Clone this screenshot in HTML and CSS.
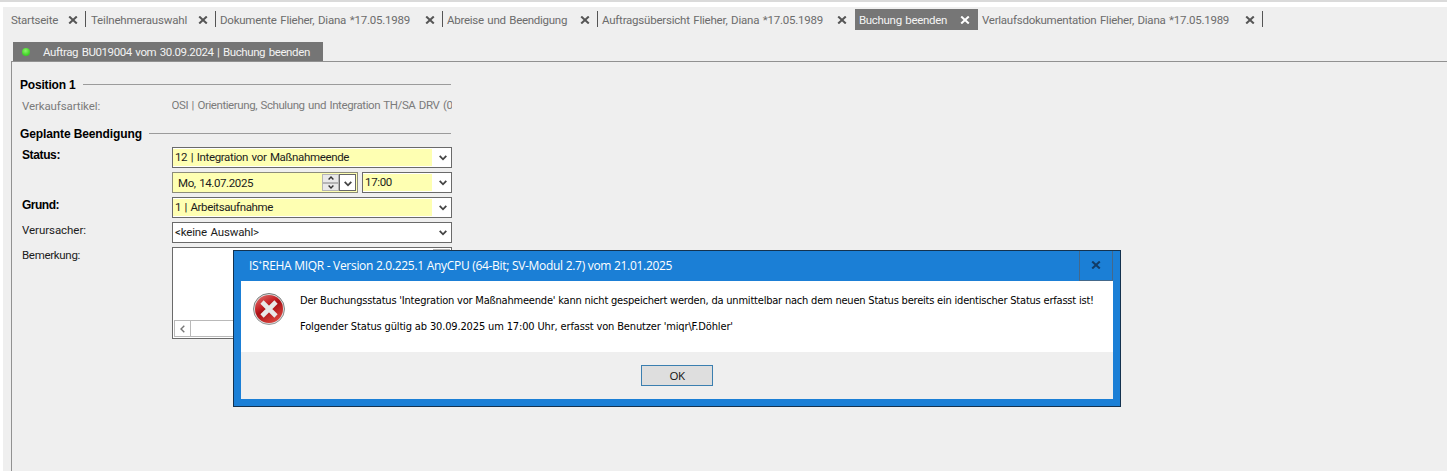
FILE: index.html
```
<!DOCTYPE html>
<html lang="de">
<head>
<meta charset="utf-8">
<title>Buchung beenden</title>
<link rel="stylesheet" href="styles.css">
</head>
<body>
<svg width="0" height="0" class="defs">
  <symbol id="x" viewBox="0 0 10 8"><path d="M1.2 .5 8.8 7.5M8.8 .5 1.2 7.5" fill="none" stroke="currentColor" stroke-width="2"/></symbol>
  <symbol id="chev" viewBox="0 0 8 6"><path d="M.7 .8 4 4.3 7.3 .8" fill="none" stroke="currentColor" stroke-width="1.8"/></symbol>
</svg>
<div class="app">
  <nav class="tabs">
    <div class="tab t1"><span>Startseite</span><svg class="x"><use href="#x"/></svg></div>
    <div class="tab t2"><span>Teilnehmerauswahl</span><svg class="x"><use href="#x"/></svg></div>
    <div class="tab t3"><span>Dokumente Flieher, Diana *17.05.1989</span><svg class="x"><use href="#x"/></svg></div>
    <div class="tab t4"><span>Abreise und Beendigung</span><svg class="x"><use href="#x"/></svg></div>
    <div class="tab t5"><span>Auftragsübersicht Flieher, Diana *17.05.1989</span><svg class="x"><use href="#x"/></svg></div>
    <div class="tab t6 active"><span>Buchung beenden</span><svg class="x"><use href="#x"/></svg></div>
    <div class="tab t7"><span>Verlaufsdokumentation Flieher, Diana *17.05.1989</span><svg class="x"><use href="#x"/></svg></div>
  </nav>
  <div class="subtab"><i class="led"></i><span>Auftrag BU019004 vom 30.09.2024 | Buchung beenden</span></div>
  <main class="panel">
    <h2 class="group g1"><span>Position 1</span></h2>
    <div class="row info"><label class="l-art">Verkaufsartikel:</label><span class="article">OSI | Orientierung, Schulung und Integration TH/SA DRV (0</span></div>
    <h2 class="group g2"><span>Geplante Beendigung</span></h2>
    <div class="row"><label class="req">Status:</label><div class="combo need c-status"><span>12 | Integration vor Maßnahmeende</span><b><svg class="chev"><use href="#chev"/></svg></b></div></div>
    <div class="row"><label></label>
      <div class="date"><span>Mo, 14.07.2025</span>
        <div class="spin"><i><svg viewBox="0 0 6 4"><path d="M.6 3.5 3 1 5.4 3.5"/></svg></i><i><svg viewBox="0 0 6 4"><path d="M.6 .5 3 3 5.4 .5"/></svg></i></div>
        <div class="drop"><svg class="chev"><use href="#chev"/></svg></div>
      </div>
      <div class="combo need time"><span>17:00</span><b><svg class="chev"><use href="#chev"/></svg></b></div>
    </div>
    <div class="row"><label class="req grund">Grund:</label><div class="combo need c-grund"><span>1 | Arbeitsaufnahme</span><b><svg class="chev"><use href="#chev"/></svg></b></div></div>
    <div class="row"><label class="l-ver">Verursacher:</label><div class="combo c-ver"><span>&lt;keine Auswahl&gt;</span><b><svg class="chev"><use href="#chev"/></svg></b></div></div>
    <div class="row"><label class="l-bem">Bemerkung:</label>
      <div class="memo"><div class="vbar"></div><div class="hbar"><i><svg viewBox="0 0 5 8"><path d="M4.3 .7 1 4 4.3 7.3"/></svg></i></div></div>
    </div>
  </main>
</div>
<div class="dialog" role="dialog">
  <header><span>IS<i class="plus">⁺</i>REHA MIQR - Version 2.0.225.1 AnyCPU (64-Bit; SV-Modul 2.7) vom 21.01.2025</span><button class="close"><svg class="x"><use href="#x"/></svg></button></header>
  <div class="message">
    <svg class="error" viewBox="0 0 34 34">
      <defs>
        <linearGradient id="red" x1="0" y1="0" x2=".6" y2="1"><stop offset="0" stop-color="#e07a76"/><stop offset=".4" stop-color="#c8262a"/><stop offset=".55" stop-color="#a90f14"/><stop offset="1" stop-color="#d8403a"/></linearGradient>
        <linearGradient id="ring" x1="0" y1="0" x2="0" y2="1"><stop offset="0" stop-color="#777"/><stop offset="1" stop-color="#999"/></linearGradient>
      </defs>
      <circle cx="17" cy="17" r="15.5" fill="#ddd" stroke="url(#ring)"/>
      <circle cx="17" cy="17" r="14" fill="url(#red)"/>
      <path d="M10 10 24 24M24 10 10 24" stroke="#e8e8e8" stroke-width="4.6"/>
    </svg>
    <div class="lines"><p class="m1">Der Buchungsstatus 'Integration vor Maßnahmeende' kann nicht gespeichert werden, da unmittelbar nach dem neuen Status bereits ein identischer Status erfasst ist!</p><p class="m2">Folgender Status gültig ab 30.09.2025 um 17:00 Uhr, erfasst von Benutzer 'miqr\F.Döhler'</p></div>
  </div>
  <footer><button class="ok">OK</button></footer>
</div>
</body>
</html>
```
FILE: styles.css
```
* { box-sizing: border-box; }
body { margin: 0; background: #fff; font: 11.5px/20px Roboto, "Liberation Sans", sans-serif; word-spacing: 1px; color: #1c1c1c; overflow: hidden; }
svg { display: block; flex: none; }
.defs { position: absolute; }
.app { height: 471px; border-top: 2px solid #dadada; padding: 5px 0 0 3px; display: flex; flex-direction: column; background: #efefef content-box; white-space: nowrap; }

.tabs { display: flex; padding: 2px 0 0 4px; height: 35px; flex: none; color: #6c6c6c; }
.tab { display: flex; align-items: center; justify-content: space-between; height: 21px; padding: 0 8px 0 4px; position: relative; }
.tab::after { content: ""; position: absolute; right: 0; top: 2px; height: 16px; border-right: 1px solid #555; }
.tab .x { color: #555; }
.x { width: 10px; height: 8px; }
.t1 { width: 79px; letter-spacing: -.245px; }
.t2 { width: 130px; padding-left: 5px; letter-spacing: -.185px; }
.t3 { width: 227px; letter-spacing: -.227px; }
.t4 { width: 155px; letter-spacing: -.275px; }
.t5 { width: 257px; letter-spacing: -.225px; }
.t6 { width: 123px; letter-spacing: -.32px; }
.t7 { width: 285px; letter-spacing: -.25px; }
.t5::after, .t6::after { display: none; }
.active { background: #767676; color: #f4f4f4; }
.active .x { color: #fff; }

.subtab { display: flex; align-items: center; flex: none; width: 310px; height: 19px; margin-left: 10px; padding-left: 9px; gap: 13px; background: #757575; color: #f2f2f2; letter-spacing: -.393px; }
.led { width: 8px; height: 8px; border-radius: 50%; background: radial-gradient(circle at 45% 35%, #8cf568, #45d42c 60%, #2fb820); }

.panel { flex: 1; margin-left: 8px; border: solid #919191; border-width: 1px 0 0 1px; padding: 13px 0 0 8px; }
.group { display: flex; align-items: center; gap: 7px; width: 431px; height: 20px; margin: 0; font: bold 12px/20px "Liberation Sans", sans-serif; word-spacing: 0; color: #000; }
.group::after { content: ""; flex: 1; height: 1px; background: #9b9b9b; margin-top: -1px; }
.g1 { letter-spacing: -.18px; }
.g2 { margin: 9px 0 3px; letter-spacing: -.11px; }
.row { display: flex; margin: 0 0 4px 2px; }
.row label { width: 150px; flex: none; height: 21px; line-height: 17px; }
.row .req { font: bold 12px/17px "Liberation Sans", sans-serif; letter-spacing: -.38px; color: #000; }
.row .grund { letter-spacing: -.5px; }
.row.info { margin-bottom: 0; color: #7b7b7b; height: 20px; }
.row .l-art { letter-spacing: -.11px; line-height: 22px; }
.l-ver { letter-spacing: -.055px; }
.l-bem { letter-spacing: -.31px; }
.article { width: 280px; overflow: hidden; letter-spacing: -.413px; text-indent: -.5px; }

.combo { display: flex; width: 280px; height: 21px; border: 1px solid #6a6a6a; background: #fff; padding: 1px 0; }
.combo span { flex: 1; padding-left: 2px; line-height: 17px; }
.combo b { width: 19px; display: flex; align-items: center; justify-content: center; padding-left: 3px; }
.need span { background: #feffb2; }
.chev { width: 8px; height: 6px; color: #444; }
.c-status { letter-spacing: -.35px; }
.c-grund { letter-spacing: -.38px; }
.c-ver { letter-spacing: -.17px; }
.time { width: 90px; letter-spacing: -.33px; }
.date { display: flex; width: 186px; height: 21px; margin-right: 4px; border: 1px solid #8c8c7a; background: #feffb2; padding: 1px 1px 1px 5px; letter-spacing: -.39px; line-height: 19px; }
.date span { flex: 1; }
.spin { width: 17px; display: flex; flex-direction: column; }
.spin i { flex: 1; display: flex; align-items: center; justify-content: center; background: #e9e9e9; border: 1px solid #b4b4b4; }
.spin svg { width: 6px; height: 4px; overflow: visible; }
.spin path { fill: none; stroke: #333; stroke-width: 1.4; }
.drop { width: 17px; border: 1px solid #666; background: #fff; display: flex; align-items: center; justify-content: center; padding-top: 2px; }
.memo { width: 280px; height: 92px; border: 1px solid #6a6a6a; background: #fff; padding: 1px; display: flex; flex-direction: column; justify-content: space-between; }
.vbar { align-self: flex-end; width: 17px; height: 16px; border: 1px solid #b5b5b5; }
.hbar { height: 17px; border: 1px solid #b9b9b9; }
.hbar i { display: flex; align-items: center; justify-content: center; width: 16px; height: 15px; border-right: 1px solid #b9b9b9; }
.hbar svg { width: 5px; height: 8px; }
.hbar path { fill: none; stroke: #777; stroke-width: 1.4; }

.dialog { position: absolute; left: 233px; top: 250px; width: 888px; height: 157px; background: #1b7fd6; border: 1px solid #14324f; padding: 0 7px 7px; display: flex; flex-direction: column; white-space: nowrap; word-spacing: 0; }
.dialog header { display: flex; justify-content: space-between; height: 30px; padding-left: 8px; color: #fff; font: 12px/29px "Open Sans", "Noto Sans", sans-serif; letter-spacing: -.3px; }
.plus { position: relative; top: -2px; font-style: normal; }
.close { width: 34px; height: 30px; padding: 0 0 1px; display: flex; align-items: center; justify-content: center; background: none; border: 1px solid #44688a; border-top: 0; color: #123c66; }
.close .x { width: 10px; }
.message { display: flex; height: 71px; flex: none; background: #fff; padding: 11px 0 0 11px; }
.error { width: 34px; height: 34px; }
.lines { padding: 1px 0 0 14px; color: #000; font: 11px/16px "DejaVu Sans Condensed", "DejaVu Sans", sans-serif; font-stretch: condensed; }
.lines p { margin: 0 0 10px; }
.m1 { letter-spacing: -.206px; }
.m2 { letter-spacing: -.147px; }
.dialog footer { flex: 1; background: #efefef; display: flex; justify-content: center; padding-top: 13px; }
.ok { width: 72px; height: 21px; padding: 0; border: 1px solid #3b7fb0; background: #dedede; color: #111; font: 11.5px/19px "Open Sans", sans-serif; letter-spacing: -.5px; }
```
